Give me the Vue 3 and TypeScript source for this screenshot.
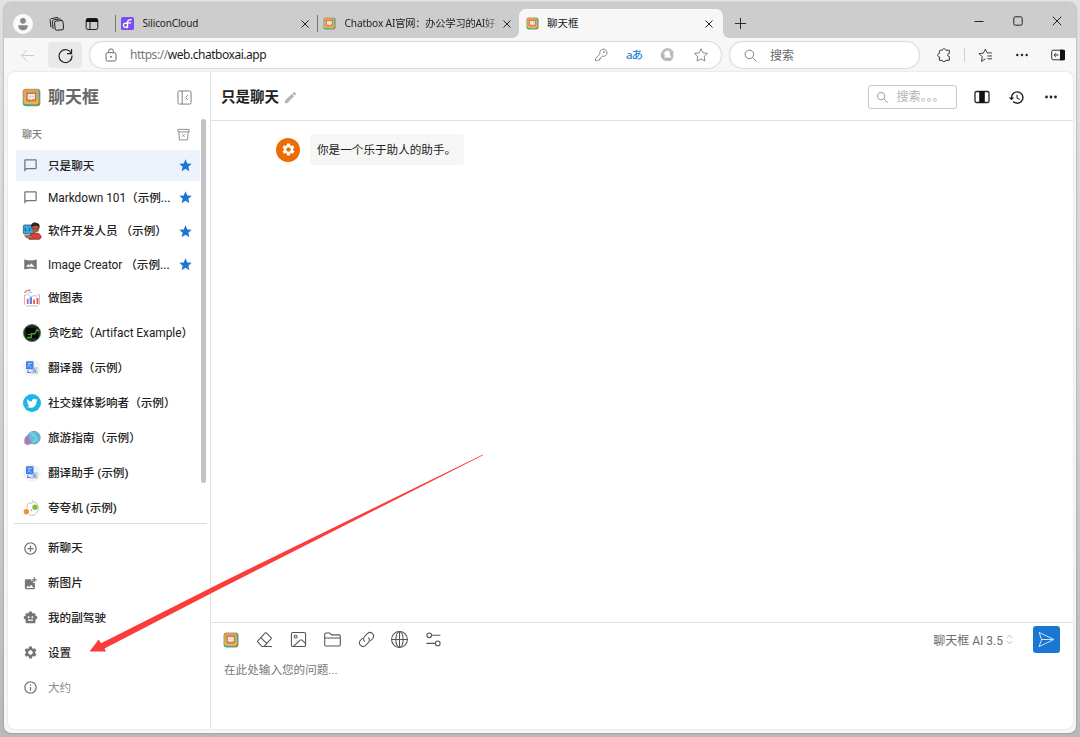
<script setup lang="ts">
interface Chat {
  title: string
  icon: string
  starred?: boolean
  round?: boolean
}

const boxLogo =
  '<defs><linearGradient id="lg" x1="0" y1="0" x2="1" y2="1"><stop offset="0" stop-color="#e0664a"/><stop offset=".25" stop-color="#8fae6a"/><stop offset=".62" stop-color="#2fa596"/><stop offset=".85" stop-color="#7f9c6a"/><stop offset="1" stop-color="#d0463a"/></linearGradient>' +
  '<linearGradient id="lf" x1="0" y1="0" x2="0" y2="1"><stop offset="0" stop-color="#e59a55"/><stop offset="1" stop-color="#f2b650"/></linearGradient></defs>' +
  '<rect x=".8" y=".8" width="22.4" height="22.4" rx="4.5" fill="url(#lg)"/><rect x="2.2" y="1.8" width="18.8" height="18.800" rx="3.500" fill="url(#lf)"/>' +
  '<rect x="5" y="5" width="13.5" height="12.5" rx="1.500" fill="#d79145"/><path d="M6.500 6.800h10.500v8.200h-4.500l-2.500 2v-2H6.500z" fill="#fbe6da" stroke="#a0685a" stroke-width="1.100"/><path d="M9.500 10.800h1.200m2.500 0h1.200" stroke="#c59a8a" stroke-width="1.200"/>'

const gearPath =
  'M19.14 12.94c.04-.3.06-.61.06-.94s-.02-.64-.07-.94l2.03-1.58c.18-.14.23-.41.12-.61l-1.92-3.32c-.12-.22-.37-.29-.59-.22l-2.39.96c-.5-.38-1.03-.7-1.62-.94L14.4 2.81c-.04-.24-.24-.41-.48-.41h-3.84c-.24 0-.43.17-.47.41l-.36 2.54c-.59.24-1.13.57-1.62.94l-2.39-.96c-.22-.08-.47 0-.59.22L2.74 8.87c-.12.21-.08.47.12.61l2.03 1.58c-.05.3-.09.63-.09.94s.02.64.07.94l-2.03 1.58c-.18.14-.23.41-.12.61l1.92 3.32c.12.22.37.29.59.22l2.39-.96c.5.38 1.03.7 1.62.94l.36 2.54c.05.24.24.41.48.41h3.84c.24 0 .44-.17.47-.41l.36-2.54c.59-.24 1.13-.56 1.62-.94l2.39.96c.22.08.47 0 .59-.22l1.92-3.32c.12-.22.07-.47-.12-.61zM12 15.6c-1.98 0-3.6-1.62-3.6-3.6s1.62-3.6 3.6-3.6 3.6 1.62 3.6 3.6-1.62 3.6-3.6 3.6z'

const translate =
  '<circle cx="12" cy="12" r="12" fill="#f3f4f6"/><rect x="10.500" y="10.500" width="9.500" height="9.500" rx="1" fill="#d3d8df"/><path d="M13.500 18.500l2-5.500 2 5.500m-3.300-2h2.600" stroke="#6f93dc" fill="none" stroke-width="1.200"/>' +
  '<rect x="4" y="3" width="10" height="10.500" rx="1" fill="#3f7fee"/><path d="M6 6h6M9 5v1c0 2.500-1.500 4-3 5M7 7.500c1 2 2 3 4.500 3.500" stroke="#b7d0ff" fill="none"/><path d="M6.500 15v3h4" stroke="#3f7fee" fill="none" stroke-width="1.600"/>'

const icons: Record<string, string> = {
  box: boxLogo,
  bubble: '<path d="M20 2H4c-1.100 0-2 .9-2 2v18l4-4h14c1.100 0 2-.9 2-2V4c0-1.100-.9-2-2-2zm0 14H5.200L4 17.200V4h16v12z" fill="#757575"/>',
  dev:
    '<rect x="0.500" y="4" width="15" height="12" rx="1.500" fill="#36a9df" stroke="#244d68"/><path d="M4 8l-1.500 2L4 12m4-4 1.500 2L8 12" stroke="#164c77" fill="none" stroke-width="1.300"/>' +
    '<path d="M8 23c0-6 2.500-8 6-8h4c4 0 6 2 6 6l-2 2z" fill="#e53d35" stroke="#622525"/><circle cx="16.500" cy="9" r="5" fill="#a46444"/><path d="M11 8C10 3 13 0 17 1c4 0 6 3 5 8-1-3-3-4.500-6-4-2 .5-3 1-5 3z" fill="#332220"/><path d="M13 9h3m1.500 0h3" stroke="#30201d"/><path d="M2 18h10l2 3-4 1-6-1z" fill="#b56d48" stroke="#53352a" stroke-width=".5"/>',
  panorama: '<path d="M21.400 4c-.1 0-.2 0-.3.1C18.200 5.200 15.100 5.700 12 5.700S5.800 5.200 2.900 4.100C2.800 4 2.700 4 2.600 4 2.200 4 2 4.300 2 4.700v14.600c0 .4.200.7.600.7.100 0 .2 0 .3-.1 2.900-1.100 6-1.600 9.100-1.600s6.200.5 9.100 1.600c.1.100.2.100.3.100.4 0 .6-.3.600-.7V4.700c0-.4-.2-.7-.6-.7zM5 16l3.500-5 2.200 2.900 2.300-3.900L19 16.200c-4.500-.8-9.500-.9-14-.2z" fill="#757575"/>',
  chart:
    '<path d="M2 8v13M4 22.500h16M22 8v13M3 9c2-5 4-1 7 1s3-3 6-1 4-3 6-2" stroke="#a3a5b8" fill="none"/><path d="M2 5q3-4 8-3.500" stroke="#e96c93" fill="none" stroke-width="1.800"/><path d="M7 5q3-2 5 0" stroke="#44b1bf" fill="none"/><path d="M5 13h2.500v7H5z" fill="#e95a8a"/><path d="M9 11h3v9H9z" fill="#4b83ed"/><path d="M13.500 14h2.500v6h-2.500z" fill="#ec614a"/><path d="M18 12h2.500v8H18z" fill="#e8524a"/>',
  snake:
    '<circle cx="12" cy="12" r="11.500" fill="#1c2c24" stroke="#4f7864"/><path d="M4 5h16v14H4z" fill="#020602"/><path d="M5 18h6v-5h5l2-4h3" fill="none" stroke="#4d9d2b" stroke-width="1.800"/><path d="M6 14h4M17 7h3" stroke="#75bd37"/>',
  translate,
  twitter:
    '<circle cx="12" cy="12" r="12" fill="#20b5e9"/><path d="M19.500 7.800c-.6.300-1.100.4-1.800.5.600-.4 1.100-1 1.300-1.700-.6.400-1.200.6-1.900.7a3 3 0 0 0-5.100 2.800C9.500 10 7.300 8.800 5.800 7a3 3 0 0 0 .9 4c-.5 0-.9-.1-1.300-.4 0 1.500 1 2.700 2.400 3-.5.100-.9.100-1.300 0 .4 1.200 1.500 2 2.800 2.100-1.300 1-2.800 1.500-4.400 1.300 5.900 3.600 13.200.3 13.200-7.100v-.5c.5-.5 1-.9 1.400-1.600z" fill="white"/>',
  travel:
    '<circle cx="14.500" cy="11.500" r="8.500" fill="#62bfe2" stroke="#5596c6"/><path d="M10 5c4 0 1 4 5 4s1 5 5 4M13 19c3-3 0-5 7-5" fill="none" stroke="#7fd9c9" stroke-width="1.800"/><path d="M17 6c3 2 4 5 3 9" fill="none" stroke="#7c8fd6"/><path d="M7 8c-4 1-6 5-5 11 3 3 6 3 9 0 0-3-1-4-2-6-2-2-1-3-2-5z" fill="#a77db7"/>',
  praise:
    '<path d="M5.500 13C4 6 9 4 12 6l2-2m-2-3 2 3c5 0 7 4 6 11-2 6-7 8-12 6" fill="none" stroke="#c3b9a3" stroke-width="1.200"/><circle cx="4.500" cy="17" r="3.600" fill="#ef9234"/><circle cx="16" cy="11" r="3.600" fill="#82b948"/><circle cx="11" cy="15" r=".9" fill="#777"/>',
  add: '<path d="M13 7h-2v4H7v2h4v4h2v-4h4v-2h-4V7zm-1-5C6.500 2 2 6.500 2 12s4.500 10 10 10 10-4.500 10-10S17.500 2 12 2zm0 18c-4.400 0-8-3.600-8-8s3.600-8 8-8 8 3.600 8 8-3.600 8-8 8z" fill="#757575"/>',
  addimg: '<path d="M19 7v2.990s-1.990.01-2 0V7h-3s.01-1.990 0-2h3V2h2v3h3v2h-3zm-3 4V8h-3V5H5c-1.100 0-2 .9-2 2v12c0 1.100.9 2 2 2h12c1.100 0 2-.9 2-2v-8h-3zM5 19l3-4 2 3 3-4 4 5H5z" fill="#757575"/>',
  robot: '<path d="M20 9V7c0-1.100-.9-2-2-2h-3c0-1.660-1.340-3-3-3S9 3.340 9 5H6c-1.100 0-2 .9-2 2v2c-1.660 0-3 1.340-3 3s1.340 3 3 3v4c0 1.100.9 2 2 2h12c1.100 0 2-.9 2-2v-4c1.660 0 3-1.340 3-3s-1.340-3-3-3zM7.500 11.500c0-.83.67-1.500 1.500-1.500s1.500.67 1.500 1.500S9.830 13 9 13s-1.500-.67-1.500-1.500zM16 17H8v-2h8v2zm-1-4c-.83 0-1.500-.67-1.500-1.500S14.170 10 15 10s1.500.67 1.500 1.500S15.830 13 15 13z" fill="#757575"/>',
  gear: `<path d="${gearPath}" fill="currentColor"/>`,
  info: '<path d="M11 7h2v2h-2zm0 4h2v6h-2zm1-9C6.480 2 2 6.480 2 12s4.480 10 10 10 10-4.480 10-10S17.520 2 12 2zm0 18c-4.410 0-8-3.590-8-8s3.590-8 8-8 8 3.590 8 8-3.590 8-8 8z" fill="#757575"/>',
  star: '<path d="M12 17.270 18.180 21l-1.640-7.030L22 9.240l-7.190-.61L12 2 9.190 8.630 2 9.240l5.460 4.730L5.820 21z" fill="#1976d2"/>',
  eraser: '<path d="M20 22H8.500l-6-6.500a1.200 1.200 0 0 1 0-1.700L13 2.800a1.200 1.200 0 0 1 1.700 0l6.500 6.500a1.200 1.200 0 0 1 0 1.700L11 22M6.800 9.300l8.200 8.200M16 22h6.500"/>',
  image: '<rect x="2" y="2" width="20" height="20" rx="2"/><circle cx="8" cy="8" r="2"/><path d="M5 21.500 14.500 13c.7-.7 1.600-.7 2.300 0L22 17.500"/>',
  folder: '<path d="M1 20V4.500c0-1 .7-1.700 1.700-1.700H8l2.500 2.700h10.800c1 0 1.700.8 1.700 1.700V19.500c0 1-.7 1.700-1.700 1.700H2.700c-1 0-1.700-.7-1.700-1.700V9.800h22"/>',
  link: '<path d="M9.500 15a5.200 5.200 0 0 1 0-7.500l4-4.200a5.200 5.200 0 0 1 7.300 7.300L17.500 14M14.500 9a5.200 5.200 0 0 1 0 7.500l-4 4.200a5.200 5.200 0 0 1-7.300-7.300L6.500 10"/>',
  globe: '<circle cx="12" cy="12" r="11.200"/><ellipse cx="12" cy="12" rx="5.200" ry="11.200"/><path d="M.8 12h22.400M12 .8v22.400"/>',
  sliders: '<circle cx="6" cy="6" r="3.300"/><path d="M9.300 6h12.500M2 17.500h12.700"/><circle cx="18" cy="17.500" r="3.300"/>',
}

const tools = ['eraser', 'image', 'folder', 'link', 'globe', 'sliders']

const chats: Chat[] = [
  { title: '只是聊天', icon: 'bubble', starred: true },
  { title: 'Markdown 101（示例...', icon: 'bubble', starred: true },
  { title: '软件开发人员 （示例）', icon: 'dev', starred: true, round: true },
  { title: 'Image Creator （示例...', icon: 'panorama', starred: true },
  { title: '做图表', icon: 'chart', round: true },
  { title: '贪吃蛇（Artifact Example）', icon: 'snake', round: true },
  { title: '翻译器（示例）', icon: 'translate', round: true },
  { title: '社交媒体影响者（示例）', icon: 'twitter', round: true },
  { title: '旅游指南（示例）', icon: 'travel', round: true },
  { title: '翻译助手 (示例)', icon: 'translate', round: true },
  { title: '夸夸机 (示例)', icon: 'praise', round: true },
]

const menu = [
  { title: '新聊天', icon: 'add' },
  { title: '新图片', icon: 'addimg' },
  { title: '我的副驾驶', icon: 'robot' },
  { title: '设置', icon: 'gear' },
  { title: '大约', icon: 'info', muted: true },
]

// Latin words are set lighter than the Chinese text around them.
const runs = (title: string) =>
  title
    .split(/([A-Za-z][A-Za-z0-9 ]*)/)
    .filter(Boolean)
    .map((text) => ({ text, latin: /^[A-Za-z]/.test(text) }))
</script>

<template>
  <div class="desktop">
    <div class="window">
      <div class="titlebar">
        <span class="profile"><svg viewBox="0 0 20 20"><circle cx="10" cy="6.800" r="2.900" /><path d="M5.200 11.200h9.600c0 3.600-2 5-4.800 5s-4.800-1.400-4.800-5z" /></svg></span>
        <svg class="workspaces" viewBox="0 0 16 16"><rect x="5.800" y="4.800" width="8.500" height="9.200" rx="1.800" transform="rotate(-5 10 9)" /><path d="M4.200 13 3.300 5.700c-.1-1 .5-1.700 1.400-1.900l6-.9c.7 0 1.200.4 1.500 1M2 11.300 1.100 4.500c-.1-1 .4-1.600 1.300-1.900L8 1.500c.8-.1 1.300.2 1.700.8" /></svg>
        <svg class="tabmenu" viewBox="0 0 14 14"><rect x="1.200" y="1.700" width="11.600" height="10.800" rx="1.800" /><path d="M5 5v7" /><path class="solid" d="M1 3.200C1 2 1.800 1.200 3 1.200h8c1.200 0 2 .8 2 2v1.800H1z" /></svg>

        <div class="tab first">
          <svg class="favicon" viewBox="0 0 14 14"><rect width="14" height="14" rx="2" fill="#7c4df0" /><path d="M7 12V6c0-2.500 1-3.200 4.500-3.200M7 6.800H4.800a2.200 2.200 0 1 0 2.200 2.200M7 6.300h4" fill="none" stroke="#fff" stroke-width="1.500" /></svg>
          <span class="tabname">SiliconCloud</span>
          <svg class="close" viewBox="0 0 10 10"><path d="m1.500 1.500 7 7m0-7-7 7" /></svg>
        </div>
        <div class="tab second">
          <svg class="favicon" viewBox="0 0 24 24" v-html="icons.box"></svg>
          <span class="tabname fade">Chatbox AI官网：办公学习的AI好</span>
          <svg class="close" viewBox="0 0 10 10"><path d="m1.500 1.500 7 7m0-7-7 7" /></svg>
        </div>
        <div class="tab active">
          <svg class="favicon" viewBox="0 0 24 24" v-html="icons.box"></svg>
          <span class="tabname">聊天框</span>
          <svg class="close" viewBox="0 0 10 10"><path d="m1.500 1.500 7 7m0-7-7 7" /></svg>
        </div>
        <svg class="newtab" viewBox="0 0 14 14"><path d="M7 1v12M1 7h12" /></svg>
        <div class="controls">
          <svg viewBox="0 0 10 10"><path d="M.5 5.500h9" /></svg>
          <svg viewBox="0 0 10 10"><rect x=".8" y=".8" width="8.400" height="8.400" rx="1.500" /></svg>
          <svg viewBox="0 0 10 10"><path d="m.7.7 8.600 8.600m0-8.600L.7 9.300" /></svg>
        </div>
      </div>

      <div class="toolbar">
        <svg class="back" viewBox="0 0 16 16"><path d="M15 8H1.500m6-6-6 6 6 6" /></svg>
        <span class="reload"><svg viewBox="0 0 16 16"><path d="M14.300 5.800A6.900 6.900 0 1 0 14.900 8M14.500 1v5H9.600" /></svg></span>
        <div class="address">
          <svg class="lock" viewBox="0 0 14 14"><rect x="2" y="4.700" width="10" height="8.300" rx="1.500" /><path d="M4.600 4.500V3.300a2.400 2.400 0 0 1 4.800 0v1.200" /><circle cx="7" cy="8.800" r=".6" /></svg>
          <span class="url"><span>https://</span>web.chatboxai.app</span>
          <svg viewBox="0 0 14 14" class="ic key"><path d="m1.500 12.500.1-2.200L6 6a3.600 3.600 0 1 1 2.300 2.200L6.800 9.600v1.200H5.500V12H4.200l-.6.600z" /><circle cx="10" cy="4" r=".6" /></svg>
          <span class="lang">aあ</span>
          <svg viewBox="0 0 14 14" class="swirl"><path d="M12.600 5.400A5 5 0 0 0 3.200 4.200M3.100 4a5 5 0 0 0 3.800 8M8.600 12.300a5 5 0 0 0 3.600-5.600" fill="none" stroke="#bdbdbd" stroke-width="2.600" /><path d="M9 3.500c2 .3 3.500 1.500 4.300 3.300l-3 1.200C10.500 6 10 4.700 9 3.500zM2 5c.5 1.200 1.600 1.800 3.200 1.500-.8 1.200-1 2.500-.6 4L1 8.500zM6 8.800c1 1.200 2.800 1.600 4.500.2L9 13l-2.700-.7C5.500 11 5.500 10 6 8.800z" fill="#b2b2b2" /></svg>
          <svg viewBox="0 0 14 14" class="ic"><path d="m7 .7 1.900 4.100 4.500.6-3.200 3.100.7 4.500L7 10.900 3.100 13l.7-4.500L.6 5.400l4.500-.6z" /></svg>
        </div>
        <div class="websearch">
          <svg viewBox="0 0 14 14"><circle cx="5.800" cy="5.800" r="4.600" /><path d="m9.200 9.200 4 4" /></svg>
          <span>搜索</span>
        </div>
        <svg class="ext" viewBox="0 0 14 14"><path d="M3.500 2.200h1.700c0-2 3.500-2 3.500 0h3.600v3.300c-2.200 0-2.200 3 0 3v3.800H8.700c0 1.900-3.500 1.900-3.500 0H2.400V8.900c-2.200-.2-2.200-3.500 0-3.500V3.300c0-.7.400-1.100 1.100-1.100z" /></svg>
        <i class="divider"></i>
        <svg class="favs" viewBox="0 0 16 16"><path d="m8 11.500-4.300 2.800.9-5.100L1 6l4.800-.6 2-4.200 2 4h5M10 8.500h5M10 11.500h5" /></svg>
        <svg class="more" viewBox="0 0 14 14"><circle cx="2.300" cy="7" r="1.200" /><circle cx="7" cy="7" r="1.200" /><circle cx="11.700" cy="7" r="1.200" /></svg>
        <svg class="side" viewBox="0 0 14 12"><rect x=".7" y="1.200" width="12.600" height="9.600" rx="1.500" /><path class="solid" d="M9 .7h3.500c1 0 1.500.5 1.500 1.500v7.600c0 1-.5 1.500-1.500 1.500H9z" /><path d="M7.500 6H3.300M5 4.200 3.200 6 5 7.800" /></svg>
      </div>

      <div class="app">
        <aside class="sidebar">
          <header class="brand">
            <svg class="logo" viewBox="0 0 24 24" v-html="icons.box"></svg>
            <h1>聊天框</h1>
            <svg class="collapse" viewBox="0 0 16 16"><rect x="1" y="1" width="14" height="14" rx="1.500" /><path d="M5.500 1v14M11.500 5.500 9 8l2.500 2.500" /></svg>
          </header>
          <div class="section">
            <span>聊天</span>
            <svg viewBox="0 0 14 14"><path d="M1 1.500h12v2.700H1zM2 4.500l.6 8.300h8.800l.6-8.300M5.800 7l2.400 2.400m0-2.400L5.800 9.400" /></svg>
          </div>
          <div class="scroller">
            <ul class="chats">
              <li v-for="(chat, i) in chats" :key="chat.title" :class="{ selected: i === 0 }">
                <span class="lead" :class="{ avatar: chat.round }"><svg viewBox="0 0 24 24" v-html="icons[chat.icon]"></svg></span>
                <span class="name"><span v-for="(run, n) in runs(chat.title)" :key="n" :class="{ latin: run.latin }">{{ run.text }}</span></span>
                <svg v-if="chat.starred" class="star" viewBox="0 0 24 24" v-html="icons.star"></svg>
              </li>
            </ul>
            <i class="thumb"></i>
          </div>
          <ul class="menu">
            <li v-for="item in menu" :key="item.title" :class="{ muted: item.muted }">
              <span class="lead"><svg viewBox="0 0 24 24" v-html="icons[item.icon]"></svg></span>
              <span class="name">{{ item.title }}</span>
            </li>
          </ul>
        </aside>

        <main class="main">
          <header class="chathead">
            <h2>只是聊天</h2>
            <svg class="pencil" viewBox="0 0 24 24"><path d="M3 17.250V21h3.750L17.810 9.940l-3.750-3.750zM20.710 7.040a1 1 0 0 0 0-1.410l-2.340-2.340a1 1 0 0 0-1.410 0l-1.830 1.830 3.750 3.750z" /></svg>
            <div class="find">
              <svg viewBox="0 0 14 14"><circle cx="5.500" cy="5.500" r="4" /><path d="m8.500 8.500 4.300 4.300" /></svg>
              <span>搜索。。。</span>
            </div>
            <svg class="columns" viewBox="0 0 16 14"><rect x="1" y="1.500" width="14" height="11" rx="1.500" /><path class="solid" d="M5.200 1h5.600v12H5.200z" /></svg>
            <svg class="history" viewBox="0 0 24 24"><path d="M13 3a9 9 0 0 0-9 9H1l3.890 3.890.07.14L9 12H6a7 7 0 1 1 2.060 4.940l-1.420 1.420A9 9 0 1 0 13 3zm-1 5v5l4.280 2.540.72-1.210-3.500-2.080V8z" /></svg>
            <svg class="more big" viewBox="0 0 14 14"><circle cx="2.500" cy="7" r="1.400" /><circle cx="7" cy="7" r="1.400" /><circle cx="11.500" cy="7" r="1.400" /></svg>
          </header>
          <section class="messages">
            <div class="message">
              <span class="sysavatar"><svg viewBox="0 0 24 24" v-html="icons.gear"></svg></span>
              <p>你是一个乐于助人的助手。</p>
            </div>
          </section>
          <footer class="composer">
            <div class="tools">
              <svg class="box" viewBox="0 0 24 24" v-html="icons.box"></svg>
              <svg v-for="t in tools" :key="t" class="tool" viewBox="0 0 24 24" v-html="icons[t]"></svg>
              <span class="model">聊天框 AI 3.5</span>
              <svg class="updown" viewBox="0 0 8 12"><path d="M1 4.200 4 1.200l3 3M1 7.800l3 3 3-3" /></svg>
              <button class="send"><svg viewBox="0 0 18 18"><path d="M1.200 1.500 16.800 9 1.200 16.500l2.600-7.500zM3.800 9h12" /></svg></button>
            </div>
            <div class="prompt">在此处输入您的问题...</div>
          </footer>
        </main>
      </div>
    </div>
    <svg class="arrow" viewBox="0 0 1080 737"><path d="M89.500 651.500 98.700 639.500 101 643.200 220 583.200 483 454.500 483 455.200 220 588.700 104.500 648.500 106 651.500z" /></svg>
  </div>
</template>

<style>
html,
body {
  margin: 0;
  overflow: hidden;
}
</style>

<style scoped>
* {
  box-sizing: border-box;
}
svg {
  display: block;
  flex: none;
  overflow: visible;
}
.desktop {
  position: relative;
  width: 1080px;
  height: 737px;
  padding: 3px 4px 0;
  background: linear-gradient(#e2e2e2, #d2d2d2 50%, #b9b9b9);
  font-family: Roboto, 'Noto Sans CJK SC', sans-serif;
  color: #222;
}
.window {
  width: 1072px;
  height: 730px;
  display: flex;
  flex-direction: column;
  background: #f7f7f7;
  border-radius: 7px;
  box-shadow: 0 0 2px #777;
  overflow: hidden;
}
.titlebar {
  height: 35px;
  flex: none;
  display: flex;
  align-items: center;
  padding: 6px 14px 0 8.500px;
  background: #cdcdcd;
  fill: none;
  stroke: #222;
}
.profile {
  width: 20px;
  height: 20px;
  border-radius: 50%;
  background: #fafafa;
}
.profile svg {
  fill: #888;
  stroke: none;
}
.workspaces {
  width: 16px;
  height: 16px;
  margin-left: 16.500px;
}
.tabmenu {
  width: 14px;
  height: 14px;
  margin: 0 16px 0 20px;
}
.solid {
  fill: #111;
  stroke: none;
}
.tab {
  position: relative;
  display: flex;
  align-items: center;
  width: 202px;
  height: 29px;
  padding: 0 7px 0 6px;
  font: 11px/16px 'Noto Sans', 'Noto Sans CJK SC', sans-serif;
  color: #222;
}
.first::before,
.second::before {
  content: '';
  width: 1px;
  height: 17px;
  margin: 0 -1px 0 -6px;
  background: #777;
}
.first .favicon,
.second .favicon {
  margin-left: 6px;
}
.favicon {
  width: 13px;
  height: 13px;
  stroke: none;
}
.tabname {
  flex: 1;
  margin-left: 8.500px;
  white-space: nowrap;
  font-size: 10.500px;
  line-height: 15px;
  padding-bottom: 1px;
}
.first .tabname {
  font-size: 10px;
  letter-spacing: -0.150px;
}
.tabname.fade {
  font-size: 10.200px;
  letter-spacing: -0.160px;
  margin-right: 1px;
  mask-image: linear-gradient(90deg, #000 88%, transparent 102%);
}
.close {
  width: 10px;
  height: 10px;
}
.active {
  width: 204px;
  padding: 0 9px 0 6.500px;
  background: #f7f7f7;
  border-radius: 7px 7px 0 0;
}
.active::before,
.active::after {
  content: '';
  position: absolute;
  bottom: 0;
  width: 6px;
  height: 6px;
}
.active::before {
  left: -6px;
  background: radial-gradient(circle at 0 0, transparent 5.500px, #f7f7f7 6px);
}
.active::after {
  right: -6px;
  background: radial-gradient(circle at 100% 0, transparent 5.500px, #f7f7f7 6px);
}
.newtab {
  width: 13px;
  height: 13px;
  margin-left: 11px;
}
.controls {
  display: flex;
  gap: 29px;
  margin: -5px 0 0 auto;
}
.controls svg {
  width: 10px;
  height: 10px;
}
.toolbar {
  height: 34px;
  flex: none;
  display: flex;
  align-items: center;
  padding: 0 7px 0 16px;
  fill: none;
  stroke: #333;
}
.back {
  width: 15px;
  height: 15px;
  stroke: #c9c9c9;
}
.reload {
  width: 34px;
  height: 26px;
  margin: 0 7px 0 13px;
  display: grid;
  place-items: center;
  background: #e9e9e9;
  border-radius: 4px;
}
.reload svg {
  width: 15px;
  height: 15px;
  stroke-width: 1.200;
  stroke: #222;
}
.address,
.websearch {
  height: 28px;
  display: flex;
  align-items: center;
  background: #fff;
  border: 1px solid #dcdcdc;
  border-radius: 14px;
  box-shadow: 0 0 1px #ddd;
}
.address {
  width: 633px;
  padding: 0 13px 0 14px;
  stroke: #888;
}
.lock {
  width: 14px;
  height: 14px;
  stroke: #666;
}
.url {
  flex: 1;
  margin-left: 12px;
  font: 12px/18px 'Noto Sans', sans-serif;
  letter-spacing: -0.460px;
  color: #1c1c1c;
}
.url span {
  color: #777;
}
.ic {
  width: 14px;
  height: 14px;
}
.lang {
  width: 16px;
  margin: 0 18px 0 18.500px;
  font: 500 11.500px/16px 'Noto Sans', 'Noto Sans CJK JP', sans-serif;
  letter-spacing: -1px;
  white-space: nowrap;
  color: #2b88d8;
}
.swirl {
  width: 14px;
  height: 14px;
  margin-right: 20px;
  stroke: none;
}
.websearch {
  width: 191px;
  margin-left: 7px;
  padding-left: 14px;
  gap: 13px;
  stroke: #777;
  color: #666;
  font-size: 12px;
  line-height: 16px;
}
.websearch span {
  padding-top: 1px;
}
.websearch svg {
  width: 13px;
  height: 13px;
}
.ext {
  width: 14px;
  height: 14px;
  margin-left: 17px;
}
.divider {
  width: 1px;
  height: 14px;
  margin: 0 13px;
  background: #d0d0d0;
}
.favs {
  width: 15px;
  height: 15px;
}
.more {
  width: 14px;
  height: 14px;
  margin-left: 22px;
  fill: #222;
  stroke: none;
}
.side {
  width: 14px;
  height: 12px;
  margin-left: 22px;
}
.app {
  display: flex;
  width: 1065px;
  height: 657px;
  margin-left: 4px;
  background: #fff;
  border-radius: 7px;
  box-shadow: 0 0 2px #ccc;
}
.sidebar {
  width: 203px;
  flex: none;
  display: flex;
  flex-direction: column;
  border-right: 1px solid #e3e3e3;
}
.brand {
  display: flex;
  align-items: center;
  height: 47px;
  padding: 3px 18px 0 14px;
}
.logo {
  width: 19px;
  height: 19px;
}
h1 {
  flex: 1;
  margin: -2px 0 0 7px;
  font: 700 17px/24px 'Noto Sans CJK SC', sans-serif;
  color: #686868;
}
.collapse {
  width: 15px;
  height: 15px;
  fill: none;
  stroke: #777;
}
.section {
  display: flex;
  justify-content: space-between;
  align-items: center;
  height: 31px;
  padding: 0 20px 1px 14px;
  font-size: 10px;
  font-weight: 500;
  color: #7c7c7c;
}
.section span {
  padding-bottom: 1px;
}
.section svg {
  width: 13px;
  height: 13px;
  fill: none;
  stroke: #858585;
}
ul {
  list-style: none;
  margin: 0;
  padding: 0;
}
.scroller {
  display: flex;
  height: 373px;
  margin: 0 3px 0 8px;
  flex: none;
}
.chats {
  width: 184px;
  flex: none;
  display: grid;
  grid-template-columns: 184px;
  grid-template-rows: 31px 33px 34px 33px 34px repeat(6, 35px);
}
li {
  display: flex;
  align-items: center;
  font-size: 11.600px;
  font-weight: 500;
  line-height: 18px;
  white-space: nowrap;
}
.chats li {
  padding: 0 7.500px 0 6px;
}
.selected {
  background: #ecf3fc;
}
.lead {
  width: 18px;
  display: grid;
  place-items: center;
  margin-right: 8px;
  color: #757575;
}
.lead svg {
  width: 15px;
  height: 15px;
  margin-right: 1px;
}
.avatar {
  margin: 0 7px 0 1px;
}
.avatar svg {
  width: 18px;
  height: 18px;
  margin-right: 0;
}
.name {
  flex: 1;
  min-width: 0;
}
.latin {
  font-size: 11.900px;
  font-weight: 400;
  letter-spacing: -0.060px;
}
.star {
  width: 15px;
  height: 15px;
}
.thumb {
  width: 5px;
  height: 364px;
  margin: -31px 0 0 1px;
  border-radius: 3px;
  background: #c3c3c3;
}
.menu {
  margin: 0 3px 0 6px;
  padding: 7px 0 0 8px;
  border-top: 1px solid #dedede;
}
.menu li {
  height: 34.800px;
}
.menu .muted {
  color: #8c8c8c;
  font-weight: 400;
}
.main {
  flex: 1;
  display: flex;
  flex-direction: column;
}
.chathead {
  display: flex;
  align-items: center;
  height: 49px;
  padding: 2px 15px 0 10px;
  border-bottom: 1px solid #e2e2e2;
}
h2 {
  margin: -2px 0 0;
  font: 700 14.500px/22px 'Noto Sans CJK SC', sans-serif;
  color: #222;
}
.pencil {
  width: 15px;
  height: 15px;
  margin-left: 4px;
  fill: #b5b5b5;
}
.find {
  display: flex;
  align-items: center;
  gap: 8px;
  width: 89px;
  height: 24px;
  margin-left: auto;
  padding-left: 6.500px;
  border: 1px solid #c8c8c8;
  border-radius: 3px;
  font-size: 12px;
  line-height: 18px;
  white-space: nowrap;
  color: #b2b2b2;
}
.find span {
  padding-bottom: 1px;
}
.find svg {
  width: 13px;
  height: 13px;
  fill: none;
  stroke: #999;
}
.columns {
  width: 16px;
  height: 14px;
  margin-left: 17px;
  fill: none;
  stroke: #222;
  stroke-width: 1.300;
}
.history {
  width: 17px;
  height: 17px;
  margin-left: 18px;
  fill: #222;
}
.more.big {
  margin-left: 19px;
}
.messages {
  flex: 1;
  padding: 13px 65px;
}
.message {
  display: flex;
  align-items: center;
  gap: 10px;
}
.sysavatar {
  width: 24px;
  height: 24px;
  display: grid;
  place-items: center;
  border-radius: 50%;
  background: #ed6c02;
  color: #fff;
}
.sysavatar svg {
  width: 15px;
  height: 15px;
}
.message p {
  margin: 0;
  padding: 1px 7px 0;
  width: 154px;
  height: 31px;
  border-radius: 3px;
  background: #f6f6f5;
  font-size: 11.600px;
  line-height: 30px;
  white-space: nowrap;
}
.composer {
  height: 107px;
  border-top: 1px solid #e0e0e0;
}
.tools {
  display: flex;
  align-items: center;
  height: 33px;
  padding: 0 13px 0 12px;
}
.box {
  width: 16px;
  height: 16px;
}
.tool {
  width: 17px;
  height: 17px;
  margin-left: 16.900px;
  fill: none;
  stroke: #555;
  stroke-width: 1.500;
}
.model {
  margin-left: auto;
  font-size: 12px;
  color: #6c6c6c;
}
.updown {
  width: 7px;
  height: 11px;
  margin: 0 20px 0 3px;
  fill: none;
  stroke: #aaa;
}
.send {
  width: 27px;
  height: 27px;
  display: grid;
  place-items: center;
  padding: 0;
  border: 0;
  border-radius: 3px;
  background: #1976d2;
}
.send svg {
  width: 17px;
  height: 17px;
  fill: none;
  stroke: #d8e8fa;
}
.prompt {
  padding: 5px 13px;
  font-size: 11.600px;
  line-height: 18px;
  color: #777;
}
.arrow {
  position: absolute;
  inset: 0;
  width: 1080px;
  height: 737px;
  fill: #fb3c3a;
  pointer-events: none;
}
</style>
